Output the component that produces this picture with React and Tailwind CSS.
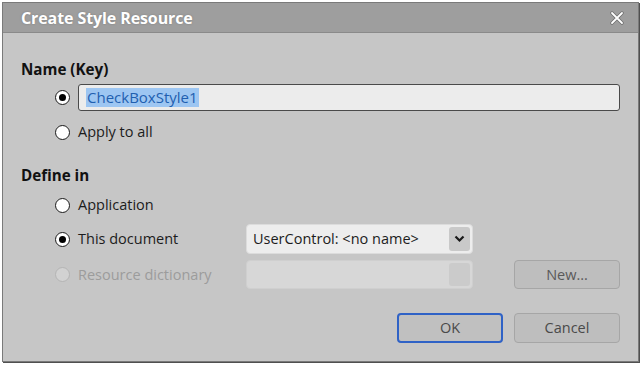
import React from 'react';

const Radio = ({ checked, disabled }) => (
    <span
        className={`flex items-center justify-center w-[15px] h-[15px] rounded-full border-[1.5px] shrink-0 ${disabled ? 'border-[#b4b4b4] bg-[#d2d2d2]' : 'border-[#1a1a1a] bg-white'}`}
    >
        {checked && <span className="w-[7px] h-[7px] rounded-full bg-black" />}
    </span>
);

const Chevron = () => (
    <svg width="11" height="8" viewBox="0 0 11 8" fill="none">
        <path d="M1.5 1.5 L5.5 5.5 L9.5 1.5" stroke="#1a1a1a" strokeWidth="2.2" />
    </svg>
);

const App = () => {
    return (
        <div className="w-[644px] h-[365px] bg-white pl-[2px] pt-[2px] font-['Open_Sans',sans-serif] text-[14.5px] text-[#1c1c1c]">
            <div className="w-[637px] h-[360px] border border-[#7a7a7a] shadow-[1px_1px_0_#505050] bg-[#c6c6c6] flex flex-col">
                <div className="h-[30px] bg-[#9e9e9e] border-b border-[#8a8a8a] flex items-center justify-between pl-[18px] pr-[14px] shrink-0">
                    <span className="text-white font-bold text-[16px] tracking-[-0.1px] [text-shadow:0_0_2px_#7a7a7a]">Create Style Resource</span>
                    <svg width="14" height="14" viewBox="0 0 14 14">
                        <path d="M2 2 L12 12 M12 2 L2 12" stroke="#6e6e6e" strokeWidth="3.4" strokeLinecap="round" />
                        <path d="M2 2 L12 12 M12 2 L2 12" stroke="#ffffff" strokeWidth="1.8" strokeLinecap="round" />
                    </svg>
                </div>

                <div className="pl-[18px] pt-[26px] flex flex-col">
                    <div className="h-[20px] flex items-center font-bold text-[15.2px] text-[#111]">Name (Key)</div>

                    <div className="mt-[5px] h-[27px] flex items-center">
                        <div className="w-[57px] flex justify-end pr-[8px]">
                            <Radio checked />
                        </div>
                        <div className="w-[542px] h-[27px] bg-[#ececec] border-[1.5px] border-[#4a4a4a] rounded-[3px] flex items-center pl-[7px]">
                            <span className="bg-[#9dc6f2] text-[#1f5fb0] leading-[19px] px-[1px] text-[15px]">CheckBoxStyle1</span>
                        </div>
                    </div>

                    <div className="mt-[11px] h-[20px] flex items-center">
                        <div className="w-[57px] flex justify-end pr-[8px]">
                            <Radio />
                        </div>
                        <span>Apply to all</span>
                    </div>

                    <div className="mt-[23px] h-[20px] flex items-center font-bold text-[15.2px] text-[#111]">Define in</div>

                    <div className="mt-[10px] h-[20px] flex items-center">
                        <div className="w-[57px] flex justify-end pr-[8px]">
                            <Radio />
                        </div>
                        <span>Application</span>
                    </div>

                    <div className="mt-[9px] h-[30px] flex items-center">
                        <div className="w-[57px] flex justify-end pr-[8px]">
                            <Radio checked />
                        </div>
                        <span className="w-[168px]">This document</span>
                        <div className="w-[227px] h-[30px] bg-[#ededed] border border-[#dcdcdc] rounded-[4px] flex items-center justify-between pl-[6px] pr-[2px]">
                            <span>UserControl: &lt;no name&gt;</span>
                            <span className="w-[21px] h-[24px] bg-[#c9c9c9] rounded-[3px] flex items-center justify-center">
                                <Chevron />
                            </span>
                        </div>
                    </div>

                    <div className="mt-[6px] h-[29px] flex items-center">
                        <div className="w-[57px] flex justify-end pr-[8px]">
                            <Radio disabled />
                        </div>
                        <span className="w-[168px] text-[#9c9c9c]">Resource dictionary</span>
                        <div className="w-[227px] h-[29px] bg-[#d7d7d7] border border-[#cfcfcf] rounded-[4px] flex items-center justify-end pr-[2px]">
                            <span className="w-[21px] h-[23px] bg-[#cbcbcb] rounded-[3px]" />
                        </div>
                        <button className="ml-[41px] w-[106px] h-[29px] bg-[#bebebe] border border-[#a6a6a6] rounded-[4px] text-[#5a5a5a] flex items-center justify-center">
                            New...
                        </button>
                    </div>

                    <div className="mt-[24px] h-[30px] flex items-center">
                        <button className="ml-[376px] w-[106px] h-[30px] bg-[#c0c0c0] border-2 border-[#2f62c6] rounded-[4px] text-[#4a4a4a] flex items-center justify-center">
                            OK
                        </button>
                        <button className="ml-[11px] w-[106px] h-[30px] bg-[#bebebe] border border-[#a6a6a6] rounded-[4px] text-[#4a4a4a] flex items-center justify-center">
                            Cancel
                        </button>
                    </div>
                </div>
            </div>
        </div>
    );
};

export default App;
